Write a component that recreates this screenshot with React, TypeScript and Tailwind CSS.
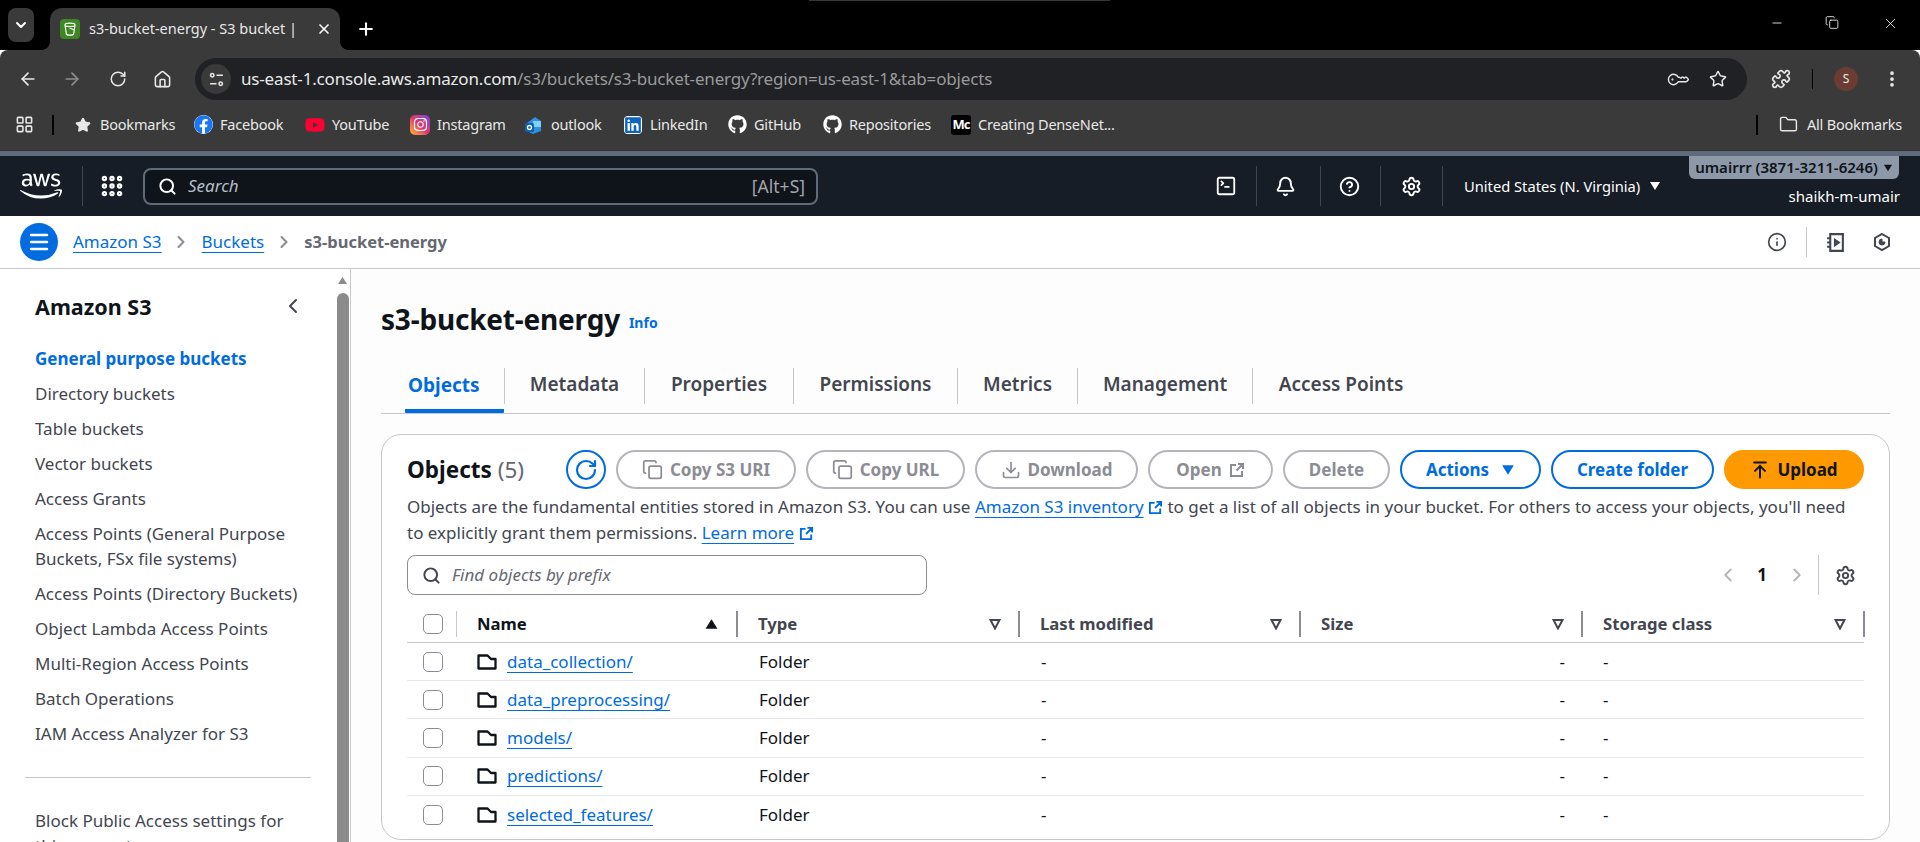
import React from "react";
import { FaAws, FaFacebook, FaYoutube, FaLinkedin, FaGithub, FaInstagram } from "react-icons/fa";
import { ChevronDown, X, Plus, ArrowLeft, ArrowRight, RotateCw, House, KeyRound, Star, Puzzle, EllipsisVertical, Minus, Search, Grip, Bell, CircleHelp, Settings, SquareTerminal, Info, ChevronLeft, ChevronRight, Menu, Copy, Download, ArrowUpToLine, Folder, LayoutGrid } from "lucide-react";

const Tri = ({ cls = "" }: { cls?: string }) => (
  <svg viewBox="0 0 12 10" className={cls}><path d="M1 1h10L6 9z" fill="currentColor" /></svg>
);
const Ext = ({ cls = "" }: { cls?: string }) => (
  <svg viewBox="0 0 16 16" className={cls} fill="none" stroke="currentColor" strokeWidth="2">
    <path d="M7 3H2v11h11V9M9 2h5v5M14 2L7.5 8.5" />
  </svg>
);
const Filter = () => (
  <svg viewBox="0 0 12 12" className="w-3 h-3 text-[#424650]" fill="none" stroke="currentColor" strokeWidth="2"><path d="M1.5 2h9L6 10.5z" /></svg>
);
const FolderIcon = () => (
  <svg viewBox="0 0 20 20" className="w-[20px] h-[20px] shrink-0" fill="none" stroke="#0f141a" strokeWidth="2.3" strokeLinejoin="round"><path d="M1.5 3.5H10.5L14 7H18.5V16.5H1.5Z" /></svg>
);

const nav = ["Directory buckets", "Table buckets", "Vector buckets", "Access Grants"];
const nav2 = ["Access Points (Directory Buckets)", "Object Lambda Access Points", "Multi-Region Access Points", "Batch Operations", "IAM Access Analyzer for S3"];
const rows = ["data_collection/", "data_preprocessing/", "models/", "predictions/", "selected_features/"];
const tabs = [
  ["Metadata", "w-[140px]"],
  ["Properties", "w-[149px]"],
  ["Permissions", "w-[164px]"],
  ["Metrics", "w-[120px]"],
  ["Management", "w-[175px]"],
  ["Access Points", "w-[177px]"],
];
const cols = "grid grid-cols-[50px_281px_282px_281px_282px_282px]";

function Btn({ children, cls }: { children: React.ReactNode; cls: string }) {
  return <div className={`h-[39px] rounded-full border-2 flex items-center justify-center gap-[7px] font-bold text-[17px] shrink-0 ${cls}`}>{children}</div>;
}
const off = "border-[#b4b4bb] text-[#8c8c94]";
const on = "border-[#006ce0] text-[#006ce0]";

function Bookmark({ icon, label, cls }: { icon: React.ReactNode; label: string; cls: string }) {
  return (
    <div className={`flex items-center gap-[7px] shrink-0 ${cls}`}>
      <span className="w-[20px] h-[20px] flex items-center justify-center shrink-0">{icon}</span>
      <span>{label}</span>
    </div>
  );
}

export default function App() {
  return (
    <div className="w-[1920px] h-[842px] overflow-hidden flex flex-col bg-white font-['Noto_Sans',sans-serif] text-[#0f141a]">
      {/* tab strip */}
      <div className="h-[50px] bg-black flex items-end text-white shrink-0 relative">
        <div className="absolute top-0 left-[809px] w-[301px] h-px bg-[#33383d]"></div>
        <div className="h-[42px] flex items-start">
          <div className="ml-[8px] w-[26px] h-[34px] rounded-lg bg-[#3a3a3a] flex items-center justify-center"><ChevronDown size={16} strokeWidth={3} /></div>
        </div>
        <div className="relative ml-[16px] w-[290px] h-[42px] bg-[#3a3a3a] rounded-t-xl flex items-center pl-[10px] pr-[8px] text-[14.5px]">
          <span className="absolute -left-[8px] bottom-0 w-[8px] h-[8px] bg-[radial-gradient(circle_at_0_0,transparent_7.5px,#3a3a3a_8px)]"></span>
          <span className="absolute -right-[8px] bottom-0 w-[8px] h-[8px] bg-[radial-gradient(circle_at_100%_0,transparent_7.5px,#3a3a3a_8px)]"></span>
          <span className="w-[20px] h-[20px] bg-[#3f8624] rounded-sm flex items-center justify-center shrink-0">
            <svg viewBox="0 0 16 16" className="w-[16px] h-[16px]" fill="none" stroke="#fff" strokeWidth="1.2"><path d="M3 4c0-2.4 10-2.4 10 0l-1.4 9c-.3 1.4-6.9 1.4-7.2 0zM3 4c0 2 10 2 10 0M7.5 7l5 2" /></svg>
          </span>
          <span className="ml-[9px] w-[206px] overflow-hidden whitespace-nowrap text-[#e8e8e8]">s3-bucket-energy - S3 bucket | S3</span>
          <X size={16} strokeWidth={2.5} className="ml-auto" />
        </div>
        <div className="h-[42px] flex items-center ml-[16px]"><Plus size={20} strokeWidth={2.5} /></div>
        <div className="ml-auto h-[50px] flex items-center text-[#eee] pb-[4px]">
          <Minus size={14} strokeWidth={1.5} />
          <span className="ml-[41px] w-[14px] h-[16px] flex"><Copy size={15} strokeWidth={1.5} /></span>
          <X size={17} strokeWidth={1.2} className="ml-[43px] mr-[21px]" />
        </div>
      </div>
      {/* toolbar */}
      <div className="h-[58px] bg-[#3a3a3a] rounded-t-lg flex items-center text-[#e8e8e8] shrink-0">
        <ArrowLeft size={20} strokeWidth={2} className="ml-[18px]" />
        <ArrowRight size={20} strokeWidth={2} className="ml-[24px] text-[#8e8e8e]" />
        <RotateCw size={18} strokeWidth={2} className="ml-[27px]" />
        <House size={19} strokeWidth={2} className="ml-[26px]" />
        <div className="ml-[23px] w-[1552px] h-[42px] rounded-full bg-[#202124] flex items-center pl-[6px] pr-[20px]">
          <div className="w-[30px] h-[30px] rounded-full bg-[#3a3a3a] flex items-center justify-center shrink-0">
            <svg viewBox="0 0 16 16" className="w-[17px] h-[17px]" fill="none" stroke="#e8e8e8" strokeWidth="1.5"><circle cx="4" cy="4" r="1.6" /><path d="M8 4h6M2 12h6" /><circle cx="12" cy="12" r="1.6" /></svg>
          </div>
          <span className="ml-[10px] text-[17px] tracking-[-0.17px] whitespace-nowrap">us-east-1.console.aws.amazon.com<span className="text-[#9a9a9a]">/s3/buckets/s3-bucket-energy?region=us-east-1&amp;tab=objects</span></span>
          <KeyRound size={19} strokeWidth={1.8} className="ml-auto rotate-[-135deg]" />
          <Star size={18} strokeWidth={2} className="ml-[22px]" />
        </div>
        <Puzzle size={20} strokeWidth={2} className="ml-[24px]" />
        <span className="ml-[21px] w-px h-[20px] bg-black"></span>
        <span className="ml-[21px] w-[24px] h-[24px] rounded-full bg-[#6b3d32] flex items-center justify-center text-[12px]">S</span>
        <EllipsisVertical size={20} strokeWidth={2.5} className="ml-[24px]" />
      </div>
      {/* bookmarks */}
      <div className="h-[42px] pb-[9px] bg-[#3a3a3a] flex items-center text-[14.5px] text-[#e8e8e8] shrink-0 tracking-[-0.2px] whitespace-nowrap">
        <LayoutGrid size={19} strokeWidth={2} className="ml-[15px]" />
        <span className="ml-[18px] w-[2px] h-[20px] bg-black"></span>
        <Bookmark cls="ml-[19px] w-[120px]" label="Bookmarks" icon={<Star size={16} fill="#e8e8e8" />} />
        <Bookmark cls="w-[112px]" label="Facebook" icon={<FaFacebook size={19} className="text-[#1877f2] bg-white rounded-full" />} />
        <Bookmark cls="w-[105px]" label="YouTube" icon={<FaYoutube size={20} className="text-[#ff0033]" />} />
        <Bookmark cls="w-[114px]" label="Instagram" icon={<span className="w-[20px] h-[20px] rounded-[5px] bg-gradient-to-tr from-[#fdb400] via-[#e1306c] to-[#7a36d8] flex items-center justify-center"><FaInstagram size={15} className="text-white" /></span>} />
        <Bookmark cls="w-[99px]" label="outlook" icon={<svg viewBox="0 0 20 20" className="w-[20px] h-[20px]"><path d="M3 8l8-6 6 4v10l-8 3-6-3z" fill="#2f8fe0" /><path d="M9 6l8 0v6H9z" fill="#7fd0f5" /><rect x="1" y="8" width="9" height="9" rx="1.5" fill="#0f5fb5" /><circle cx="5.5" cy="12.5" r="2" fill="none" stroke="#fff" strokeWidth="1.3" /></svg>} />
        <Bookmark cls="w-[104px]" label="LinkedIn" icon={<FaLinkedin size={18} className="text-[#0a66c2] bg-white rounded-sm" />} />
        <Bookmark cls="w-[95px]" label="GitHub" icon={<FaGithub size={19} className="text-white" />} />
        <Bookmark cls="w-[129px]" label="Repositories" icon={<FaGithub size={19} className="text-white" />} />
        <Bookmark cls="w-[160px]" label="Creating DenseNet..." icon={<span className="w-[20px] h-[20px] bg-black rounded-[3px] text-white text-[13px] font-bold flex items-center justify-center overflow-hidden tracking-[-1px]">Mc</span>} />
        <span className="ml-auto w-[2px] h-[20px] bg-black"></span>
        <Folder size={19} strokeWidth={1.8} className="ml-[21px]" />
        <span className="ml-[9px] mr-[18px]">All Bookmarks</span>
      </div>
      <div className="h-[6px] bg-[#5f6b7a] border-t border-[#333] shrink-0"></div>
      {/* aws nav */}
      <div className="h-[60px] bg-[#161d26] text-white flex items-center shrink-0 relative">
        <FaAws size={42} className="ml-[20px] text-white" />
        <span className="ml-[20px] w-px h-[40px] bg-[#424650]"></span>
        <Grip size={26} strokeWidth={3} className="ml-[16px]" />
        <div className="ml-[18px] w-[675px] h-[37px] rounded-lg border-2 border-[#5f6b7a] bg-[#0f141a] flex items-center pl-[13px] pr-[11px] text-[#b6bec9] text-[17px]">
          <Search size={19} strokeWidth={2.5} className="text-white" />
          <i className="ml-[11px]">Search</i>
          <span className="ml-auto text-[#a4a4ad] text-[17.5px]">[Alt+S]</span>
        </div>
        <SquareTerminal size={22} strokeWidth={2} className="ml-[397px]" />
        <span className="ml-[19px] w-px h-[40px] bg-[#424650]"></span>
        <Bell size={21} strokeWidth={2.2} className="ml-[18px]" />
        <span className="ml-[24px] w-px h-[40px] bg-[#424650]"></span>
        <CircleHelp size={21} strokeWidth={2.2} className="ml-[18px]" />
        <span className="ml-[20px] w-px h-[40px] bg-[#424650]"></span>
        <Settings size={21} strokeWidth={2.2} className="ml-[20px]" />
        <span className="ml-[20px] w-px h-[40px] bg-[#424650]"></span>
        <span className="ml-[21px] text-[14.7px] whitespace-nowrap">United States (N. Virginia)</span>
        <Tri cls="w-[12px] h-[10px] ml-[9px]" />
        <div className="ml-auto mr-[21px] self-start flex flex-col items-end">
          <div className="h-[23px] w-[210px] bg-[#8d99a8] rounded-b-md flex items-center justify-center gap-[5px] text-[15px] font-semibold text-[#0f141a] whitespace-nowrap">umairrr (3871-3211-6246)<Tri cls="w-[10px] h-[8px]" /></div>
          <span className="mt-[6px] mr-[-1px] text-[15px]">shaikh-m-umair</span>
        </div>
      </div>
      {/* breadcrumbs */}
      <div className="h-[53px] bg-white border-b border-[#c6c6cd] flex items-center shrink-0 text-[17px]">
        <span className="ml-[20px] w-[38px] h-[38px] rounded-full bg-[#006ce0] flex items-center justify-center text-white"><Menu size={24} strokeWidth={2.5} /></span>
        <span className="ml-[15px] text-[#006ce0] underline underline-offset-4">Amazon S3</span>
        <ChevronRight size={20} strokeWidth={2.5} className="ml-[9px] text-[#8c8c94]" />
        <span className="ml-[11px] text-[#006ce0] underline underline-offset-4">Buckets</span>
        <ChevronRight size={20} strokeWidth={2.5} className="ml-[10px] text-[#8c8c94]" />
        <span className="ml-[10px] font-bold text-[16.5px] text-[#656871]">s3-bucket-energy</span>
        <Info size={20} strokeWidth={2} className="ml-auto text-[#424650]" />
        <span className="ml-[19px] w-px h-[30px] bg-[#c6c6cd]"></span>
        <svg viewBox="0 0 20 20" className="ml-[18px] w-[21px] h-[21px]" fill="none" stroke="#424650" strokeWidth="2"><path d="M5 2h12v16H5zM2 6h4M2 10h4M2 14h4" /><path d="M9 6.5l5 3.5-5 3.5z" fill="#424650" strokeWidth="1" /></svg>
        <svg viewBox="0 0 20 20" className="ml-[26px] mr-[28px] w-[20px] h-[20px]" fill="none" stroke="#424650" strokeWidth="2"><path d="M10 2l7 4v8l-7 4-7-4V6z" /><path d="M10 7a3 3 0 1 0 3 3h-3z" fill="#424650" strokeWidth="1" /></svg>
      </div>
      {/* body */}
      <div className="flex-1 flex min-h-0">
        <aside className="w-[351px] shrink-0 border-r border-[#c6c6cd] flex bg-white overflow-hidden">
          <div className="w-[335px] shrink-0 pl-[35px] pr-[10px] text-[#424650] text-[17px] leading-[25px]">
            <div className="mt-[22px] mr-[26px] h-[30px] flex items-center justify-between text-[#0f141a] font-bold text-[21.5px]">
              Amazon S3
              <ChevronLeft size={24} strokeWidth={2} className="text-[#424650] mr-[-6px]" />
            </div>
            <div className="mt-[25px] font-bold text-[#006ce0]">General purpose buckets</div>
            <div className="mt-[10px] flex flex-col gap-[10px] whitespace-nowrap">
              {nav.map((n) => <div key={n}>{n}</div>)}
              <div>Access Points (General Purpose<br />Buckets, FSx file systems)</div>
              {nav2.map((n) => <div key={n}>{n}</div>)}
            </div>
            <div className="mt-[31px] ml-[-10px] mr-[14px] border-t border-[#c6c6cd]"></div>
            <div className="mt-[30px] whitespace-nowrap">Block Public Access settings for<br />this account</div>
          </div>
          <div className="w-[15px] shrink-0 flex flex-col items-center pt-[7px]">
            <Tri cls="w-[13px] h-[9px] rotate-180 text-[#8b8b8b]" />
            <div className="mt-[8px] w-[12px] flex-1 bg-[#8b8b8b] rounded-t-md"></div>
          </div>
        </aside>
        <main className="flex-1 min-w-0 bg-[#fdfdfd] pl-[30px] pr-[30px] overflow-hidden">
          <div className="mt-[30px] h-[40px] flex items-center">
            <h1 className="text-[28px] font-bold tracking-[-0.2px] text-[#0f141a]">s3-bucket-energy</h1>
            <span className="ml-[9px] mt-[6px] text-[14px] font-bold text-[#006ce0]">Info</span>
          </div>
          {/* tabs */}
          <div className="mt-[23px] h-[52px] border-b border-[#c6c6cd] flex items-center text-[19px] font-semibold text-[#424650]">
            <div className="ml-[24px] w-[99px] h-full flex items-center pl-[3px] pb-[1px] text-[#006ce0] font-bold border-b-[4px] border-[#006ce0] rounded-b-[1px]">Objects</div>
            {tabs.map(([t, w]) => (
              <div key={t} className={`h-[36px] mb-[3px] pb-[3px] flex items-center justify-center border-l border-[#c6c6cd] ${w}`}>{t}</div>
            ))}
          </div>
          {/* card */}
          <section className="mt-[20px] h-[406px] rounded-[20px] border border-[#c6c6cd] bg-white px-[25px] pt-[15px]">
            <div className="flex items-center h-[39px]">
              <h2 className="text-[22.5px] font-bold">Objects <span className="font-normal text-[#656871]">(5)</span></h2>
              <span className="ml-auto w-[40px] h-[39px] rounded-full border-2 border-[#006ce0] text-[#006ce0] flex items-center justify-center shrink-0">
                <RotateCw size={24} strokeWidth={2.2} />
              </span>
              <div className="ml-[10px] flex gap-[10px]">
                <Btn cls={`w-[180px] ${off}`}><Copy size={21} strokeWidth={2} />Copy S3 URI</Btn>
                <Btn cls={`w-[159px] ${off}`}><Copy size={21} strokeWidth={2} />Copy URL</Btn>
                <Btn cls={`w-[163px] ${off}`}><Download size={20} strokeWidth={2} />Download</Btn>
                <Btn cls={`w-[125px] ${off}`}>Open<Ext cls="w-[16px] h-[16px]" /></Btn>
                <Btn cls={`w-[107px] ${off}`}>Delete</Btn>
                <Btn cls={`w-[141px] gap-[12px] ${on}`}>Actions<Tri cls="w-[14px] h-[12px]" /></Btn>
                <Btn cls={`w-[163px] ${on}`}>Create folder</Btn>
                <Btn cls="w-[140px] bg-[#ff9900] border-[#ff9900] text-[#0f141a]"><ArrowUpToLine size={20} strokeWidth={2.4} />Upload</Btn>
              </div>
            </div>
            <p className="mt-[5px] text-[17px] leading-[26px] text-[#424650] whitespace-nowrap">
              Objects are the fundamental entities stored in Amazon S3. You can use <span className="text-[#006ce0] underline underline-offset-4">Amazon S3 inventory</span> <Ext cls="inline w-[15px] h-[15px] text-[#006ce0] align-[-2px]" /> to get a list of all objects in your bucket. For others to access your objects, you'll need<br />
              to explicitly grant them permissions. <span className="text-[#006ce0] underline underline-offset-4">Learn more</span> <Ext cls="inline w-[15px] h-[15px] text-[#006ce0] align-[-2px]" />
            </p>
            <div className="mt-[9px] flex items-center">
              <div className="w-[520px] h-[40px] rounded-lg border border-[#8c8c94] flex items-center pl-[14px] text-[#656871] text-[17px]">
                <Search size={19} strokeWidth={2.5} className="text-[#424650]" />
                <i className="ml-[11px]">Find objects by prefix</i>
              </div>
              <ChevronLeft size={22} strokeWidth={2} className="ml-auto text-[#b4b4bb]" />
              <span className="ml-[13px] w-[20px] text-center font-bold text-[17px]">1</span>
              <ChevronRight size={22} strokeWidth={2} className="ml-[14px] text-[#b4b4bb]" />
              <span className="ml-[10px] w-px h-[40px] bg-[#c6c6cd]"></span>
              <Settings size={21} strokeWidth={2.2} className="ml-[16px] mr-[8px] text-[#424650]" />
            </div>
            {/* table */}
            <div className={`${cols} mt-[10px] h-[38px] items-center border-b border-[#c6c6cd] text-[16.7px] font-bold text-[#424650]`}>
              <div className="flex items-center h-[26px] border-r border-[#c6c6cd] pl-[16px]"><span className="w-[20px] h-[20px] rounded-[5px] border border-[#8c8c94]"></span></div>
              <div className="flex items-center h-[26px] border-r-2 border-[#8c8c94] pl-[20px] pr-[17px] justify-between text-[#0f141a]">Name<Tri cls="w-[15px] h-[12px] rotate-180" /></div>
              {["Type", "Last modified", "Size", "Storage class"].map((c) => (
                <div key={c} className="flex items-center h-[26px] border-r-2 border-[#8c8c94] pl-[20px] pr-[17px] justify-between">{c}<Filter /></div>
              ))}
            </div>
            {rows.map((r, i) => (
              <div key={r} className={`${cols} h-[38.2px] items-center text-[17px] ${i < 4 ? "border-b border-[#e8e8ec]" : ""}`}>
                <div className="pl-[16px]"><span className="block w-[20px] h-[20px] rounded-[5px] border border-[#8c8c94]"></span></div>
                <div className="pl-[20px] flex items-center gap-[10px]">
                  <FolderIcon />
                  <span className="text-[#006ce0] underline underline-offset-4">{r}</span>
                </div>
                <div className="pl-[21px]">Folder</div>
                <div className="pl-[21px]">-</div>
                <div className="text-right pr-[18px]">-</div>
                <div className="pl-[20px]">-</div>
              </div>
            ))}
          </section>
        </main>
      </div>
    </div>
  );
}
